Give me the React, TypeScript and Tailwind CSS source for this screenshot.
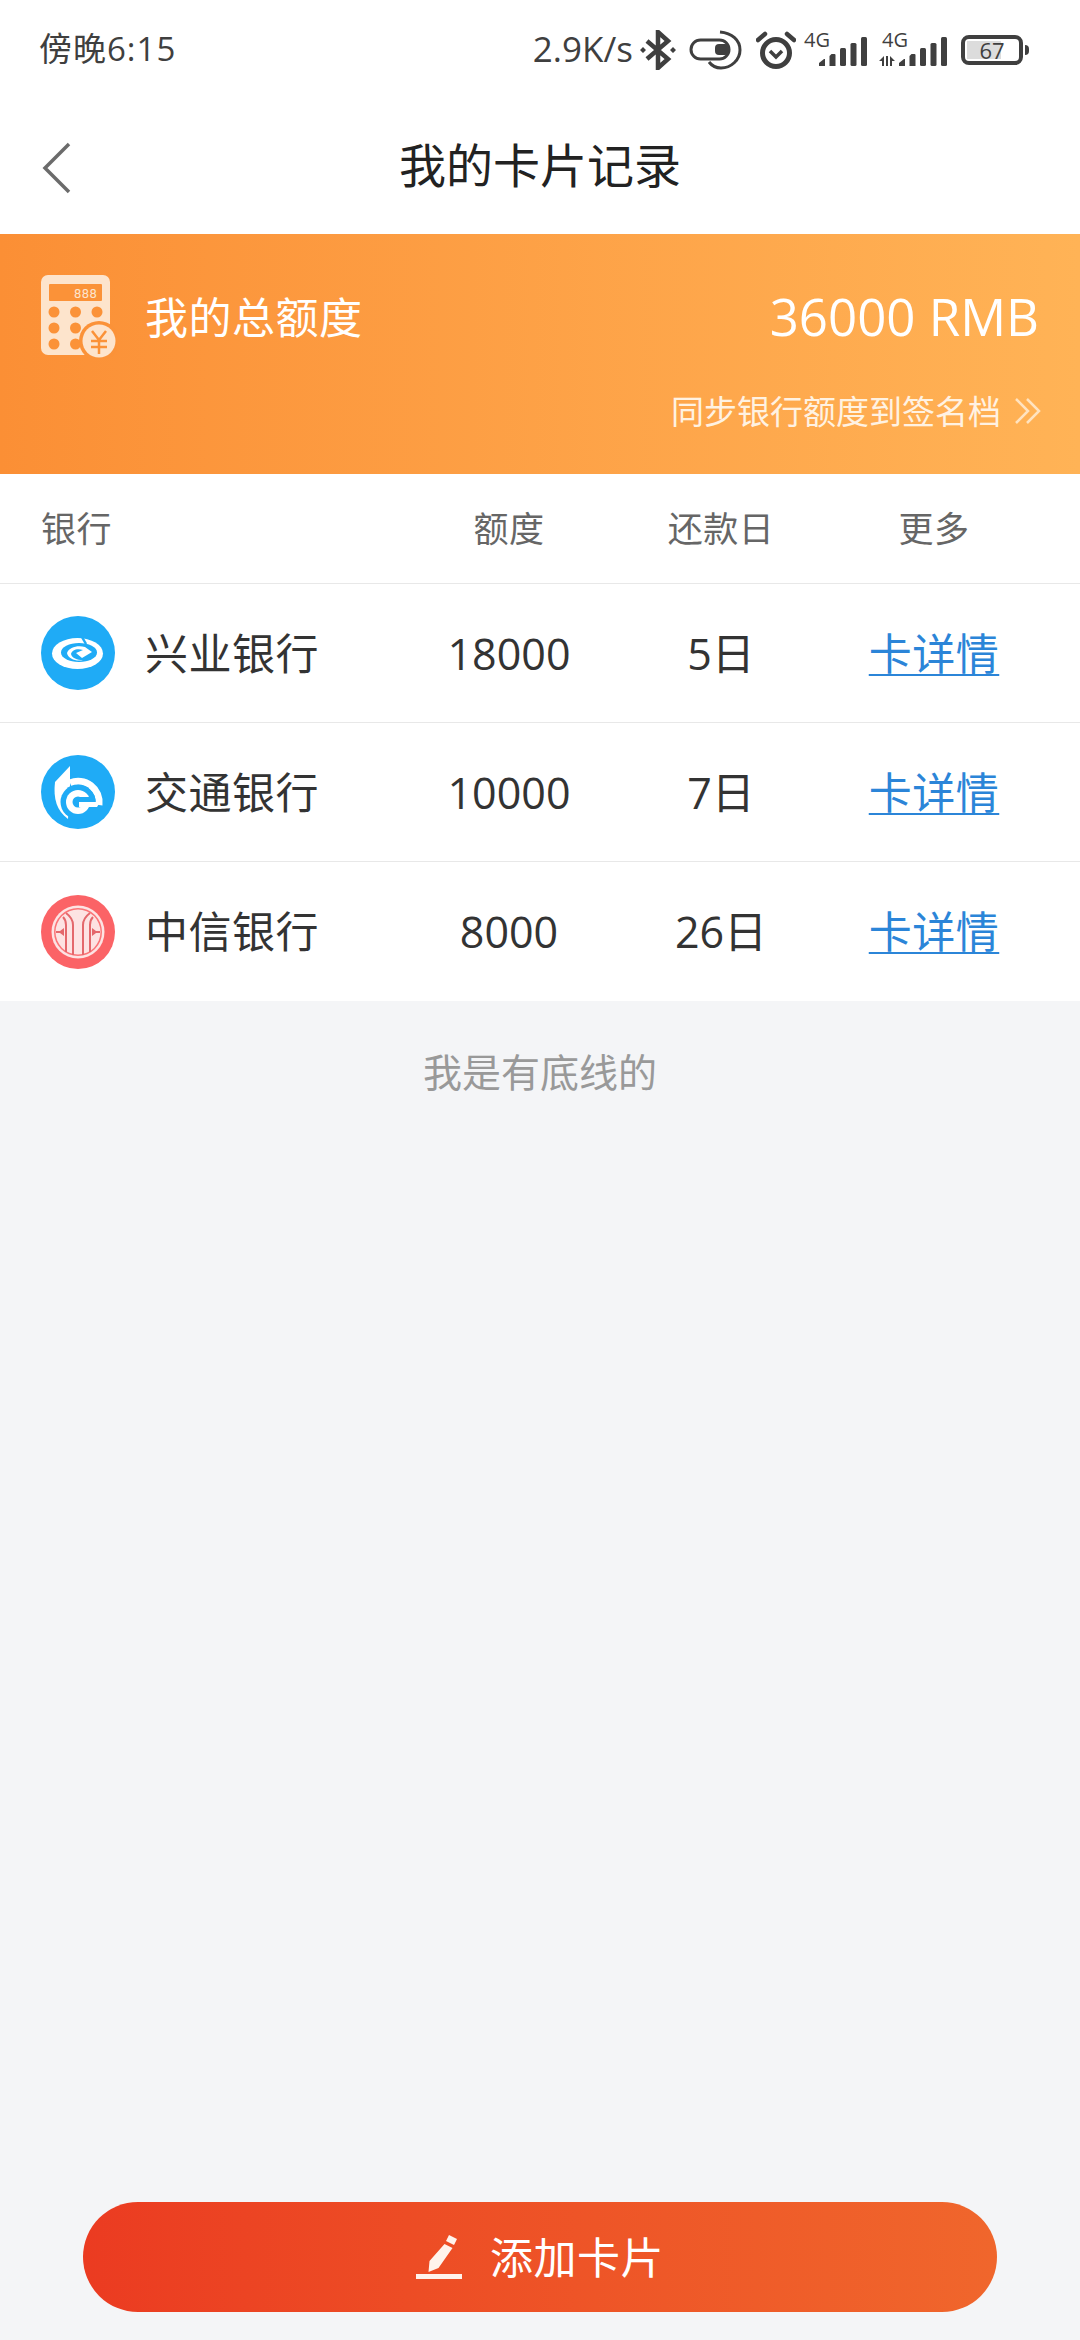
const cards = [
  { name: "兴业银行", limit: "18000", day: "5日", logo: "cib" },
  { name: "交通银行", limit: "10000", day: "7日", logo: "bocom" },
  { name: "中信银行", limit: "8000", day: "26日", logo: "citic" },
]

function SignalBars({ arrows }: { arrows?: boolean }) {
  return (
    <div className={`relative h-[34px] ${arrows ? "w-[68px]" : "w-[63px]"}`}>
      <span className={`absolute top-0 text-[20px] leading-[14px] ${arrows ? "left-[3px]" : "left-0"}`}>4G</span>
      <svg width={arrows ? 68 : 63} height="34" viewBox={arrows ? "0 0 68 34" : "0 0 63 34"} fill="currentColor">
        {arrows && <path d="M0 28l5-5v10h-2v-5zM7 23h2v10H7zM11 23l5 5h-3v5h-2z" />}
        <g transform={arrows ? "translate(20 0)" : "translate(15 0)"}>
          <path d="M0 33v-3l5-4h1v7z" />
          <path d="M10.500 33v-10l2-2h3a1 1 0 0 1 1 1v11z" />
          <rect x="21" y="15" width="6" height="18" rx="1.500" />
          <rect x="31.500" y="10" width="6" height="23" rx="1.500" />
          <rect x="42" y="4" width="6" height="29" rx="1.500" />
        </g>
      </svg>
    </div>
  )
}

function StatusBar() {
  return (
    <div className="flex h-[100px] items-center justify-between pl-[39px] pr-[51px] text-[#3f3f3f]">
      <span className="-mt-[3px] text-[33px] leading-none tracking-[1px]">傍晚6:15</span>
      <div className="flex items-center">
        <span className="-mt-[3px] mr-[7px] text-[35px] leading-none">2.9K/s</span>
        <svg width="36" height="40" viewBox="0 0 36 40" fill="none" stroke="currentColor" strokeWidth="4.500">
          <path d="M7 11l21 18-10 9V2l10 9L7 29" />
          <path d="M3 17l3 3-3 3-3-3zM33 17l3 3-3 3-3-3z" fill="currentColor" stroke="none" />
        </svg>
        <svg width="54" height="42" viewBox="0 0 54 42" fill="none" stroke="currentColor" strokeWidth="3" className="ml-[13px]">
          <rect x="2" y="11" width="38" height="19" rx="9.500" />
          <path d="M31 3C43 4 51 11 51 21C51 31 42 39 32 39C27 39 23 37 20 33" />
          <rect x="26" y="15" width="14" height="11" rx="4" fill="currentColor" stroke="none" />
        </svg>
        <svg width="40" height="40" viewBox="0 0 40 40" fill="none" stroke="currentColor" className="ml-[13px]">
          <circle cx="20" cy="23" r="13.500" strokeWidth="5" />
          <path d="M14 21l6 6 6-6" strokeWidth="3.500" />
          <path d="M2 10L9 4M38 10L31 4" strokeWidth="4.500" strokeLinecap="round" />
        </svg>
        <div className="ml-[8px]">
          <SignalBars />
        </div>
        <div className="ml-[12px]">
          <SignalBars arrows />
        </div>
        <div className="ml-[14px] flex items-center">
          <div className="flex h-[30px] w-[62px] items-center rounded-[8px] border-[4px] border-[#3f3f3f] p-[2px]">
            <div className="relative h-full w-full">
              <div className="h-full w-[67%] bg-[#dcdcdc]" />
              <span className="absolute inset-0 flex items-center justify-center text-[22px] leading-none">67</span>
            </div>
          </div>
          <div className="ml-[2px] h-[10px] w-[4px] rounded-r-sm bg-[#3f3f3f]" />
        </div>
      </div>
    </div>
  )
}

function CalculatorIcon() {
  return (
    <svg width="76" height="84" viewBox="0 0 76 84">
      <rect x="0" y="0" width="69" height="80" rx="7" fill="#fde4cc" />
      <rect x="8" y="9" width="53" height="17" rx="1" fill="#fb9238" />
      <text x="33" y="23" fontSize="13" fill="#fde4cc" fontFamily="Roboto, sans-serif" letterSpacing="0.5">888</text>
      <g fill="#fb9238">
        <circle cx="13" cy="37" r="5.500" />
        <circle cx="34.500" cy="37" r="5.500" />
        <circle cx="56" cy="37" r="5.500" />
        <circle cx="13" cy="53" r="5.500" />
        <circle cx="34.500" cy="53" r="5.500" />
        <circle cx="13" cy="69" r="5.500" />
        <circle cx="34.500" cy="69" r="5.500" />
      </g>
      <circle cx="58" cy="66" r="20" fill="#fb9238" />
      <circle cx="58" cy="66" r="16.500" fill="#fde4cc" />
      <path d="M51 56l7 9 7-9M50 66h16M50 72h16M58 65v14" fill="none" stroke="#fb9238" strokeWidth="2.500" />
    </svg>
  )
}

function BankLogo({ kind }: { kind: string }) {
  if (kind === "cib") {
    return (
      <svg width="74" height="74" viewBox="0 0 74 74" className="shrink-0">
        <circle cx="37" cy="37" r="37" fill="#1fabf6" />
        <ellipse cx="36.500" cy="37.500" rx="25.500" ry="15.500" fill="#ffffff" />
        <ellipse cx="38" cy="36.500" rx="18" ry="9.500" fill="#1fabf6" />
        <path d="M41 21l4 7" stroke="#1fabf6" strokeWidth="2.500" />
        <path d="M26 37C28 31 37 29 44 31L51 36L41 42L35 37L42 34C36 32 31 34 30 38C31 42 36 44 42 44C36 46 27 43 26 37Z" fill="#ffffff" />
      </svg>
    )
  }
  if (kind === "bocom") {
    return (
      <svg width="74" height="74" viewBox="0 0 74 74" className="shrink-0">
        <circle cx="37" cy="37" r="37" fill="#1fabf6" />
        <path d="M29 11L14 27C12 44 16 56 27 64L29 30Z" fill="#ffffff" />
        <path d="M29 28A21 21 0 0 1 58 50" fill="none" stroke="#ffffff" strokeWidth="7" />
        <circle cx="37" cy="47" r="17.500" fill="#1fabf6" />
        <circle cx="37" cy="47" r="12" fill="#ffffff" />
        <circle cx="37" cy="47" r="5.500" fill="#1fabf6" />
        <path d="M38 42h14v5H38z" fill="#1fabf6" />
        <path d="M38 47h21l-3 5H38z" fill="#ffffff" />
      </svg>
    )
  }
  return (
    <svg width="74" height="74" viewBox="0 0 74 74" className="shrink-0">
      <circle cx="37" cy="37" r="37" fill="#fb6366" />
      <circle cx="37" cy="37" r="26.500" fill="#fde3e3" />
      <circle cx="37" cy="37" r="24" fill="#fb7477" />
      <circle cx="37" cy="37" r="22.500" fill="#fde3e3" />
      <g fill="none" stroke="#e4686c" strokeWidth="2">
        <path d="M32 60V30C32 25 29 21 25 18M42 60V30C42 25 45 21 49 18" />
        <path d="M25 57V30C25 27 24 24 22 22M49 57V30C49 27 50 24 52 22" />
      </g>
      <path d="M15 36h4l4-3v8l-4-3h-4zM59 36h-4l-4-3v8l4-3h4z" fill="#e4686c" />
    </svg>
  )
}

function Row({ name, limit, day, logo, last }: { name: string; limit: string; day: string; logo: string; last?: boolean }) {
  return (
    <div className={`grid h-[139px] grid-cols-[363px_210px_214px_212px] items-center pl-[41px] ${last ? "" : "border-b border-[#e8e8e8]"}`}>
      <div className="flex items-center gap-[30px]">
        <BankLogo kind={logo} />
        <span className="text-[43px] leading-none tracking-[0.5px] text-[#333333]">{name}</span>
      </div>
      <span className="text-center text-[43px] leading-none text-[#333333]">{limit}</span>
      <span className="text-center text-[43px] leading-none text-[#333333]">{day}</span>
      <a className="text-center text-[43px] leading-none tracking-[0.5px] text-[#2b85d8] underline decoration-2 underline-offset-[4px]">卡详情</a>
    </div>
  )
}

export default function App() {
  return (
    <div className="flex min-h-[2340px] w-[1080px] flex-col bg-[#f4f5f7] font-['Open_Sans','Noto_Sans_CJK_SC',sans-serif]">
      <div className="bg-white">
        <StatusBar />
        {/* Title bar */}
        <div className="grid h-[134px] grid-cols-[1fr_auto_1fr] items-center px-[42px]">
          <svg width="30" height="52" viewBox="0 0 30 52" fill="none" stroke="#6b6b6b" strokeWidth="3.500" className="mt-[2px]">
            <path d="M27 2L3 26l24 24" />
          </svg>
          <h1 className="-mt-[3px] text-[47px] font-normal leading-none text-[#222222]">我的卡片记录</h1>
          <div />
        </div>
      </div>

      {/* Total limit */}
      <div className="h-[240px] bg-gradient-to-r from-[#fb8f35] to-[#ffb356] px-[41px] pt-[41px] text-white">
        <div className="flex h-[84px] items-center justify-between">
          <div className="flex items-center gap-[28px]">
            <CalculatorIcon />
            <span className="text-[43px] leading-none tracking-[0.5px]">我的总额度</span>
          </div>
          <span className="-mt-[2px] text-[51px] leading-none">36000 RMB</span>
        </div>
        <div className="-mr-[3px] mt-[32px] flex h-[40px] items-center justify-end text-[#fff2e2]">
          <span className="text-[33px] leading-none">同步银行额度到签名档</span>
          <svg width="28" height="28" viewBox="0 0 28 28" fill="none" stroke="#ffe3c0" strokeWidth="2.500" className="ml-[13px]">
            <path d="M2 2l12 12L2 26M13 2l12 12-12 12" />
          </svg>
        </div>
      </div>

      {/* Card table */}
      <div className="bg-white">
        <div className="grid h-[110px] grid-cols-[363px_210px_214px_212px] items-center border-b border-[#e8e8e8] pl-[41px] text-[35px] leading-none tracking-[0.5px] text-[#666666]">
          <span className="-mt-[1px]">银行</span>
          <span className="-mt-[1px] text-center">额度</span>
          <span className="-mt-[1px] text-center">还款日</span>
          <span className="-mt-[1px] text-center">更多</span>
        </div>
        {cards.map((card, i) => (
          <Row key={card.name} {...card} last={i === cards.length - 1} />
        ))}
      </div>

      <p className="mt-[51px] text-center text-[39px] leading-none text-[#999999]">我是有底线的</p>

      <button className="mx-auto mb-[28px] mt-auto flex h-[110px] w-[914px] items-center justify-center rounded-full bg-gradient-to-r from-[#eb3b21] to-[#f0662c] text-white">
        <svg width="46" height="44" viewBox="0 0 46 44" fill="#fff3ec">
          <path d="M33 0l8 4-3 6-8-4zM28.500 9l8 4-14 20-10 4 1-11z" />
          <rect x="0" y="39" width="46" height="5" />
        </svg>
        <span className="ml-[28px] text-[43px] leading-none tracking-[0.5px]">添加卡片</span>
      </button>
    </div>
  )
}
